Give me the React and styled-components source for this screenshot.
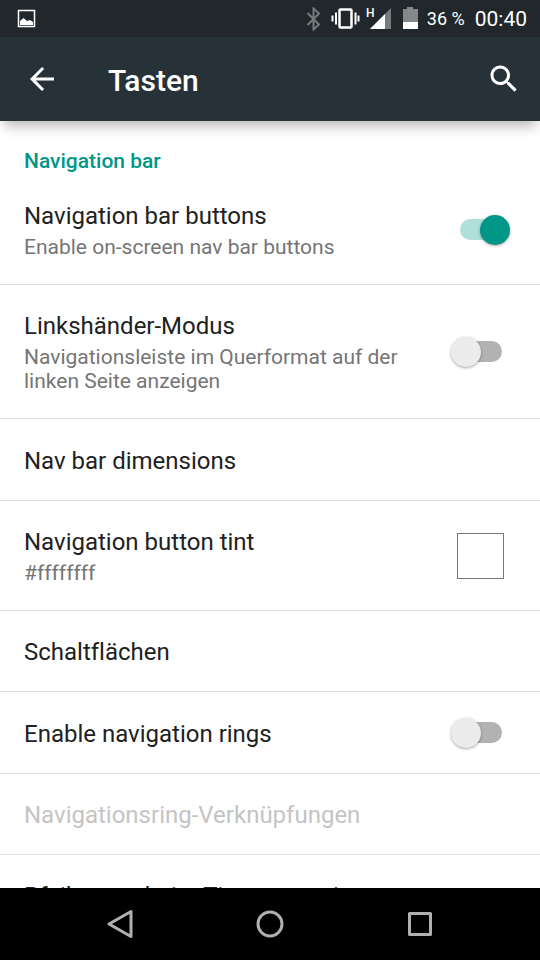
import React, { useState } from 'react';
import styled, { createGlobalStyle } from 'styled-components';

const GlobalStyle = createGlobalStyle`
  * { box-sizing: border-box; }
  body {
    margin: 0;
    background: #fff;
    font-family: Roboto, "Liberation Sans", sans-serif;
    font-variant-ligatures: none;
    color: #212121;
  }
`;

const Screen = styled.div`
  display: flex;
  flex-direction: column;
  height: 100vh;
`;

const StatusBar = styled.div`
  display: flex;
  flex: none;
  align-items: center;
  justify-content: space-between;
  height: 37px;
  padding: 0 13px 0 16px;
  background: #21272a;
  color: #fff;
`;

const StatusGroup = styled.div`
  display: flex;
  align-items: center;
`;

const BatteryText = styled.span`
  margin-left: 7px;
  font-size: 18px;
  line-height: 24px;
`;

const Clock = styled.span`
  margin-left: 10px;
  font-size: 21px;
  line-height: 24px;
`;

const AppBar = styled.header`
  display: flex;
  flex: none;
  align-items: center;
  height: 84px;
  padding: 0 18px 0 24px;
  background: #263238;
  color: #fff;
  box-shadow: 0 9px 12px -4px rgba(0, 0, 0, 0.28);
  z-index: 1;
`;

const AppTitle = styled.h1`
  flex: 1;
  margin: 0 0 0 48px;
  padding-top: 3px;
  font-size: 30px;
  font-weight: 500;
  line-height: 36px;
`;

const IconButton = styled.button`
  display: flex;
  padding: 0;
  border: 0;
  background: none;
  color: inherit;
  cursor: pointer;
`;

const Content = styled.main`
  flex: 1;
  min-height: 0;
  overflow-y: auto;
  scrollbar-width: none;
`;

const Category = styled.h2`
  margin: 0;
  padding: 28px 24px 2px;
  font-size: 21px;
  font-weight: 500;
  line-height: 24px;
  color: #009688;
`;

const Row = styled.div`
  display: flex;
  align-items: center;
  justify-content: space-between;
  gap: 24px;
  min-height: ${(p) => (p.$compact ? '81px' : '82px')};
  padding: 0 24px;
  border-bottom: 1px solid #dedede;
  color: ${(p) => (p.$disabled ? '#c4c4c4' : '#212121')};
`;

const RowText = styled.label`
  display: flex;
  flex-direction: column;
  gap: 5px;
  max-width: 400px;
  padding: 27px 0 25px;
`;

const RowTitle = styled.span`
  font-size: 24px;
  line-height: 28px;
`;

const RowSummary = styled.span`
  font-size: 21px;
  line-height: 24px;
  color: #757575;
`;

const Switch = styled.input.attrs({ type: 'checkbox', role: 'switch' })`
  appearance: none;
  display: flex;
  flex: none;
  align-items: center;
  width: 42px;
  height: 21px;
  margin: 0 14px;
  border-radius: 11px;
  background: #b2b2b2;
  cursor: pointer;

  &::before {
    content: '';
    flex: none;
    width: 30px;
    height: 30px;
    margin-left: -9px;
    border-radius: 50%;
    background: #ececec;
    box-shadow: 0 1px 3px rgba(0, 0, 0, 0.35);
  }

  &:checked { background: #b0e0da; }
  &:checked::before {
    margin-left: 20px;
    background: #009688;
  }
`;

const Swatch = styled.button`
  flex: none;
  width: 47px;
  height: 46px;
  margin-right: 12px;
  border: 1px solid #757575;
  background: #fff;
`;

const NavBar = styled.nav`
  display: flex;
  flex: none;
  height: 72px;
  padding: 0 45px;
  background: #000;
  color: #b0b0b0;
`;

const NavButton = styled(IconButton)`
  flex: 1;
  align-items: center;
  justify-content: center;
`;

const StatusIcons = () => (
  <svg width="114" height="24" viewBox="306 7 114 24" aria-hidden="true">
    <path
      d="M307.500 13L319 24.500L313.500 29.500V8.500L319 13.500L307.500 25"
      fill="none"
      stroke="#757a7c"
      strokeWidth="2"
    />
    <g fill="none" stroke="#fff">
      <rect x="339.500" y="9.500" width="12" height="18" rx="1" strokeWidth="2.500" />
      <path d="M336 12.500V24.500M355.500 12.500V24.500M332.500 15.500V21.500M358.500 15.500V21.500" strokeWidth="2" />
    </g>
    <path d="M391 8V29H370Z" fill="#757a7c" />
    <path d="M385 14V29H370Z" fill="#fff" />
    <text x="366" y="17" fill="#fff" fontSize="12" fontWeight="500">H</text>
    <path d="M407 7h6v2h5v20h-15v-20h4z" fill="#858788" />
    <path d="M403 22h15v7h-15z" fill="#fff" />
  </svg>
);

const PictureIcon = () => (
  <svg width="20" height="20" viewBox="0 0 20 20" aria-hidden="true">
    <rect x="2.500" y="1.500" width="16" height="16" fill="none" stroke="#fff" strokeWidth="1.500" />
    <path d="M4 16V12L7.500 9L11 12L14 11L17 13V16Z" fill="#fff" />
  </svg>
);

const BackIcon = () => (
  <svg width="36" height="36" viewBox="0 0 24 24" fill="currentColor" aria-hidden="true">
    <path d="M20 11H7.830l5.590-5.590L12 4l-8 8 8 8 1.410-1.410L7.830 13H20v-2z" />
  </svg>
);

const SearchIcon = () => (
  <svg width="36" height="36" viewBox="0 0 24 24" fill="currentColor" aria-hidden="true">
    <path d="M15.500 14h-.79l-.28-.27C15.410 12.590 16 11.110 16 9.500 16 5.910 13.090 3 9.500 3S3 5.910 3 9.500 5.910 16 9.500 16c1.610 0 3.090-.59 4.230-1.570l.27.28v.79l5 4.990L20.490 19l-4.990-5zm-6 0C7.010 14 5 11.990 5 9.500S7.010 5 9.500 5 14 7.010 14 9.500 11.990 14 9.500 14z" />
  </svg>
);

const NavIcon = ({ children }) => (
  <svg
    width="36"
    height="36"
    viewBox="0 0 36 36"
    fill="none"
    stroke="currentColor"
    strokeWidth="3"
    strokeLinejoin="round"
    aria-hidden="true"
  >
    {children}
  </svg>
);

function Preference({ id, title, summary, compact, disabled, children }) {
  return (
    <Row $compact={compact} $disabled={disabled}>
      <RowText as={children ? 'label' : 'div'} htmlFor={children ? id : undefined}>
        <RowTitle>{title}</RowTitle>
        {summary && <RowSummary>{summary}</RowSummary>}
      </RowText>
      {children}
    </Row>
  );
}

export default function App() {
  const [on, setOn] = useState({ buttons: true, left: false, rings: false });
  const toggle = (key) => (
    <Switch
      id={key}
      checked={on[key]}
      onChange={(e) => setOn({ ...on, [key]: e.target.checked })}
    />
  );

  return (
    <Screen>
      <GlobalStyle />
      <StatusBar>
        <PictureIcon />
        <StatusGroup>
          <StatusIcons />
          <BatteryText>36 %</BatteryText>
          <Clock>00:40</Clock>
        </StatusGroup>
      </StatusBar>
      <AppBar>
        <IconButton aria-label="Zurück"><BackIcon /></IconButton>
        <AppTitle>Tasten</AppTitle>
        <IconButton aria-label="Suchen"><SearchIcon /></IconButton>
      </AppBar>
      <Content>
        <Category>Navigation bar</Category>
        <Preference id="buttons" title="Navigation bar buttons" summary="Enable on-screen nav bar buttons">
          {toggle('buttons')}
        </Preference>
        <Preference
          id="left"
          title="Linkshänder-Modus"
          summary="Navigationsleiste im Querformat auf der linken Seite anzeigen"
        >
          {toggle('left')}
        </Preference>
        <Preference title="Nav bar dimensions" />
        <Preference id="tint" title="Navigation button tint" summary="#ffffffff">
          <Swatch id="tint" />
        </Preference>
        <Preference title="Schaltflächen" compact />
        <Preference id="rings" title="Enable navigation rings">
          {toggle('rings')}
        </Preference>
        <Preference title="Navigationsring-Verknüpfungen" compact disabled />
        <Preference title="Pfeiltasten beim Tippen anzeigen" compact />
      </Content>
      <NavBar>
        <NavButton aria-label="Zurück">
          <NavIcon><path d="M7 18L29 5.500V30.500Z" /></NavIcon>
        </NavButton>
        <NavButton aria-label="Startseite">
          <NavIcon><circle cx="18" cy="18" r="12" /></NavIcon>
        </NavButton>
        <NavButton aria-label="Übersicht">
          <NavIcon><rect x="7.500" y="7.500" width="21" height="21" /></NavIcon>
        </NavButton>
      </NavBar>
    </Screen>
  );
}
